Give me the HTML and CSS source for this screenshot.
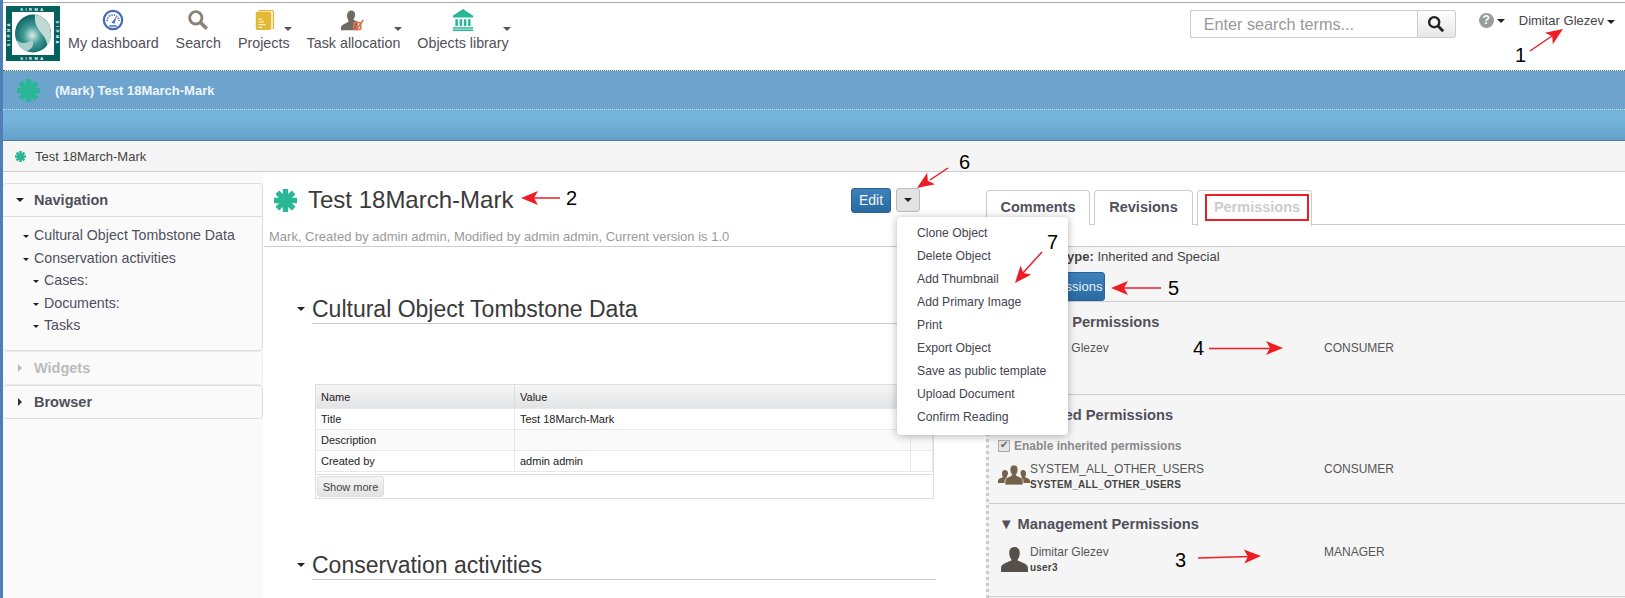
FILE: index.html
```html
<!DOCTYPE html>
<html lang="en">
<head>
    <meta charset="UTF-8">
    <title>Test 18March-Mark</title>
    <link rel="stylesheet" href="styles.css">
</head>
<body>
    <svg class="defs" width="0" height="0">
        <symbol id="star" viewBox="0 0 24 24">
            <g stroke="#2ab795" stroke-width="5.6">
                <path d="M12 0V24M0 12H24M3.5 3.5L20.5 20.5M20.5 3.5L3.5 20.5"/>
            </g>
            <circle cx="12" cy="12" r="7" fill="#2ab795"/>
        </symbol>
        <symbol id="glass" viewBox="0 0 20 20">
            <circle cx="8" cy="8" r="5.6" fill="none" stroke="currentColor" stroke-width="2.6"/>
            <path d="M12 12L18 18" stroke="currentColor" stroke-width="3.2"/>
        </symbol>
        <symbol id="person" viewBox="0 0 28 26">
            <path d="M14 0c4 0 5.500 3 5.500 6.500 0 3-1.500 5.500-2.500 7 1 2 11 3 11 8V26H0v-4.500c0-5 10-6 11-8-1-1.500-2.500-4-2.500-7C8.500 3 10 0 14 0z" fill="#57504a"/>
        </symbol>
    </svg>

    <div class="page">
        <header class="topbar">
            <svg class="logo" viewBox="0 0 54 55">
                <defs>
                    <radialGradient id="ball" cx="48%" cy="55%" r="55%">
                        <stop offset="0" stop-color="#dceeea"/>
                        <stop offset="0.45" stop-color="#3f9a94"/>
                        <stop offset="1" stop-color="#0a5f60"/>
                    </radialGradient>
                </defs>
                <rect width="54" height="55" fill="#05615f"/>
                <rect x="6" y="6" width="42" height="43" fill="#fff"/>
                <ellipse cx="27" cy="27.500" rx="18" ry="19" fill="url(#ball)"/>
                <path d="M29 8.700C38 9.500 45 18 45 27.500C45 32 43.500 36 41 39.500C42 29 27 25 29 8.700z" fill="#bfd9d7"/>
                <path d="M20 45C15 43 11 38 10 33C14 39 22 37 26 34C29 38 26 44 20 45z" fill="#a9cfcb"/>
                <text class="logo-txt" x="27" y="4.500" text-anchor="middle">SIRMA</text>
                <text class="logo-txt" x="27" y="53.500" text-anchor="middle">SIRMA</text>
                <text class="logo-txt" x="27" y="4.500" text-anchor="middle" transform="rotate(-90 27 27.500)">SIRMA</text>
                <text class="logo-txt" x="27" y="4.500" text-anchor="middle" transform="rotate(90 27 27.500)">SIRMA</text>
            </svg>

            <nav class="menu">
                <a class="menu-item">
                    <svg class="menu-icon" viewBox="0 0 24 24">
                        <circle cx="12" cy="12" r="10" fill="#fff" stroke="#4468b4" stroke-width="2.400"/>
                        <path d="M5.500 13a6.500 6.500 0 0 1 13 0" fill="none" stroke="#4468b4" stroke-width="1.800" stroke-dasharray="1.500 1.200"/>
                        <path d="M10.500 15L16 7.500L13.500 16z" fill="#4468b4"/>
                        <path d="M8 18.500H16" stroke="#4468b4" stroke-width="1.600"/>
                    </svg>
                    <span>My dashboard</span>
                </a>
                <a class="menu-item">
                    <svg class="menu-icon glass"><use href="#glass"/></svg>
                    <span>Search</span>
                </a>
                <a class="menu-item has-caret">
                    <svg class="menu-icon" viewBox="0 0 24 24">
                        <path d="M6 1H21a2 2 0 0 1 2 2V22H21.500V2.500H6z" fill="#e3b836"/>
                        <rect x="3" y="3" width="17" height="20" rx="2" fill="#e3b836"/>
                        <path d="M6 11H10M6 14H12M6 17H14M6 20H10" stroke="#fbeec0" stroke-width="1.200"/>
                    </svg>
                    <span>Projects</span>
                    <i class="caret"></i>
                </a>
                <a class="menu-item has-caret">
                    <svg class="menu-icon wide" viewBox="0 0 28 24">
                        <path d="M12 1c3 0 4.500 2 4.500 5 0 2-1 4-2 5 1 2 4 2 5 3v10H0v-3c0-4 8-5 9-8-1-1-2-4-2-6 0-3 2-6 5-6z" fill="#6f6a64"/>
                        <rect x="15" y="15" width="8" height="8" rx="1" fill="none" stroke="#e2704a" stroke-width="2"/>
                        <path d="M17 18L19.500 21L26 12" fill="none" stroke="#e2704a" stroke-width="1.800"/>
                    </svg>
                    <span>Task allocation</span>
                    <i class="caret"></i>
                </a>
                <a class="menu-item has-caret">
                    <svg class="menu-icon wide" viewBox="0 0 26 26">
                        <path d="M13 0L25 8V10H1V8z" fill="#2ab795"/>
                        <path d="M4 12H7V20H4zM9 12H12V20H9zM14 12H17V20H14zM19 12H22V20H19z" fill="#2ab795"/>
                        <rect x="1" y="21.500" width="24" height="1.800" fill="#2ab795"/>
                        <rect x="1" y="24.200" width="24" height="1.800" fill="#2ab795"/>
                    </svg>
                    <span>Objects library</span>
                    <i class="caret"></i>
                </a>
            </nav>

            <div class="tools">
                <form class="searchbox">
                    <input type="text" placeholder="Enter search terms...">
                    <button type="button"><svg class="search-glass"><use href="#glass"/></svg></button>
                </form>
                <span class="help">?</span><i class="caret dark"></i>
                <span class="username">Dimitar Glezev</span><i class="caret dark"></i>
            </div>
        </header>

        <div class="band">
            <svg class="band-star"><use href="#star"/></svg>
            <span>(Mark) Test 18March-Mark</span>
        </div>
        <div class="subband"></div>
        <div class="crumbs">
            <svg class="crumb-star"><use href="#star"/></svg>
            <span>Test 18March-Mark</span>
        </div>

        <div class="main">
            <aside class="side">
                <div class="panel">
                    <div class="panel-head"><i class="caret dark"></i>Navigation</div>
                    <ul class="tree">
                        <li><i class="caret dark"></i>Cultural Object Tombstone Data</li>
                        <li><i class="caret dark"></i>Conservation activities</li>
                        <li class="sub"><i class="caret dark"></i>Cases:</li>
                        <li class="sub"><i class="caret dark"></i>Documents:</li>
                        <li class="sub"><i class="caret dark"></i>Tasks</li>
                    </ul>
                </div>
                <div class="panel muted"><div class="panel-head"><i class="caret-right"></i>Widgets</div></div>
                <div class="panel"><div class="panel-head"><i class="caret-right"></i>Browser</div></div>
            </aside>

            <section class="center">
                <div class="obj-head">
                    <div class="obj-title">
                        <svg class="title-star"><use href="#star"/></svg>
                        <h1>Test 18March-Mark</h1>
                        <button class="btn-edit">Edit</button>
                        <button class="btn-more"><i class="caret dark"></i></button>
                    </div>
                    <p class="obj-meta">Mark, Created by admin admin, Modified by admin admin, Current version is 1.0</p>
                </div>

                <h2 class="sec-title"><i class="caret dark"></i>Cultural Object Tombstone Data</h2>
                <div class="grid-wrap">
                    <table class="grid">
                        <tr><th class="c1">Name</th><th class="c2">Value</th><th></th></tr>
                        <tr><td>Title</td><td>Test 18March-Mark</td><td></td></tr>
                        <tr class="alt"><td>Description</td><td></td><td></td></tr>
                        <tr><td>Created by</td><td>admin admin</td><td></td></tr>
                    </table>
                    <div class="grid-foot"><button>Show more</button></div>
                </div>
                <h2 class="sec-title"><i class="caret dark"></i>Conservation activities</h2>

                <ul class="dropdown">
                    <li>Clone Object</li>
                    <li>Delete Object</li>
                    <li>Add Thumbnail</li>
                    <li>Add Primary Image</li>
                    <li>Print</li>
                    <li>Export Object</li>
                    <li>Save as public template</li>
                    <li>Upload Document</li>
                    <li>Confirm Reading</li>
                </ul>
            </section>

            <section class="right">
                <div class="tabs">
                    <a class="tab">Comments</a>
                    <a class="tab">Revisions</a>
                    <a class="tab active"><span>Permissions</span></a>
                </div>
                <div class="perm-body">
                    <p class="perm-type"><b>Permission type:</b> Inherited and Special</p>
                    <button class="btn-perm">Edit Permissions</button>

                    <div class="perm-sec special">
                        <h3>&#9660; Special Permissions</h3>
                        <div class="perm-row">
                            <div class="who"><div>Dimitar Glezev</div></div>
                            <div class="role">CONSUMER</div>
                        </div>
                    </div>

                    <div class="perm-sec inherited">
                        <h3>&#9660; Inherited Permissions</h3>
                        <label class="inherit"><input type="checkbox" checked disabled>Enable inherited permissions</label>
                        <div class="perm-row">
                            <svg class="users" viewBox="0 0 32 20">
                                <path d="M7 5c2 0 3 1.500 3 3 0 2-1 3-1.500 4 1 1 6 1 6 4v2H0v-2c0-3 4-3 5-4-.500-1-1-2-1-4 0-1.500 1-3 3-3zM25 5c2 0 3 1.500 3 3 0 2-.500 3-1 4 1 1 5 1 5 4v2H18v-2c0-3 5-3 6-4-.500-1-1.500-2-1.500-4 0-1.500.500-3 2.500-3z" fill="#75604a"/>
                                <path d="M16 0c3 0 4 2 4 4.500 0 2.500-1 4-2 5.500 1 1.500 7 2 7 6v4H7v-4c0-4 6-4.500 7-6-1-1.500-2-3-2-5.500C12 2 13 0 16 0z" fill="#75604a" stroke="#f5f5f5" stroke-width=".8"/>
                            </svg>
                            <div class="who">
                                <div>SYSTEM_ALL_OTHER_USERS</div>
                                <small>SYSTEM_ALL_OTHER_USERS</small>
                            </div>
                            <div class="role">CONSUMER</div>
                        </div>
                    </div>

                    <div class="perm-sec managed">
                        <h3>&#9660; Management Permissions</h3>
                        <div class="perm-row">
                            <svg class="user"><use href="#person"/></svg>
                            <div class="who">
                                <div>Dimitar Glezev</div>
                                <small>user3</small>
                            </div>
                            <div class="role">MANAGER</div>
                        </div>
                    </div>
                </div>
            </section>
        </div>

        <!-- notes drawn on top of the screenshot -->
        <svg class="notes" width="1625" height="598">
            <defs>
                <symbol id="head" overflow="visible"><path d="M0 0L-17 -7L-13 0L-17 7z" fill="#ee1c25"/></symbol>
            </defs>
            <g stroke="#ee1c25" stroke-width="1.500">
                <path d="M1530 51L1552 36"/>
                <path d="M560 198H530"/>
                <path d="M948 168L930 180"/>
                <path d="M1042 252L1022 274"/>
                <path d="M1161 288H1122"/>
                <path d="M1209 348.500H1270"/>
                <path d="M1198 558L1250 556.500"/>
            </g>
            <use href="#head" transform="translate(1563 29) rotate(-34)"/>
            <use href="#head" transform="translate(521 198) rotate(180)"/>
            <use href="#head" transform="translate(917 188) rotate(146)"/>
            <use href="#head" transform="translate(1015 283) rotate(130)"/>
            <use href="#head" transform="translate(1111 288) rotate(180)"/>
            <use href="#head" transform="translate(1283 348)"/>
            <use href="#head" transform="translate(1261 556) rotate(-2)"/>
            <g class="note-num">
                <text x="1515" y="62">1</text>
                <text x="566" y="205">2</text>
                <text x="1175" y="567">3</text>
                <text x="1193" y="355">4</text>
                <text x="1168" y="295">5</text>
                <text x="959" y="169">6</text>
                <text x="1047" y="249">7</text>
            </g>
        </svg>
    </div>
</body>
</html>
```

FILE: styles.css
```css
/* Page frame */
html, body {
    margin: 0;
    height: 598px;
    overflow: hidden;
}
body {
    font-family: "Liberation Sans", Arial, sans-serif;
    font-size: 13px;
    color: #555;
    background: #fff;
}
.defs {
    display: block;
    height: 0;
}
.page {
    position: relative;
    height: 598px;
    box-sizing: border-box;
    padding-top: 2px;
    border-left: 3px solid #4f7fb5;
}

/* Carets */
.caret {
    display: inline-block;
    width: 0;
    height: 0;
    border-top: 4px solid #555;
    border-left: 4px solid transparent;
    border-right: 4px solid transparent;
}
.caret.dark {
    border-top-color: #222;
}
.caret-right {
    display: inline-block;
    width: 0;
    height: 0;
    border-left: 4px solid #333;
    border-top: 4px solid transparent;
    border-bottom: 4px solid transparent;
}

/* Top bar */
.topbar {
    display: flex;
    height: 67px;
    border-top: 1px solid #aaa;
    border-bottom: 1px dotted #3b7d6f;
    background: #fff;
}
.logo {
    width: 54px;
    height: 55px;
    margin: 3px 0 0 3px;
}
.logo-txt {
    font-size: 4px;
    font-weight: bold;
    fill: #fff;
    letter-spacing: 2.500px;
}
.menu {
    display: flex;
    margin-left: 8px;
}
.menu-item {
    position: relative;
    display: flex;
    flex-direction: column;
    align-items: center;
    margin-right: 17px;
    padding-top: 6px;
    font-size: 14.300px;
    color: #50505a;
}
.menu-icon {
    width: 22px;
    height: 22px;
    margin-bottom: 4px;
}
.menu-icon.wide {
    width: 24px;
    height: 22px;
}
.menu-icon.glass {
    color: #8a8078;
}
.has-caret .caret {
    position: absolute;
    top: 24px;
    right: -2px;
}
.tools {
    display: flex;
    align-items: flex-start;
    margin-left: auto;
    padding-top: 7px;
    padding-right: 10px;
}
.searchbox {
    display: flex;
    margin: 0 23px 0 0;
}
.searchbox input {
    width: 227px;
    height: 28px;
    box-sizing: border-box;
    padding: 0 13px;
    border: 1px solid #ccc;
    border-right: 0;
    border-radius: 3px 0 0 3px;
    font-family: inherit;
    font-size: 16.200px;
}
.searchbox input::placeholder {
    color: #999;
}
.searchbox button {
    width: 39px;
    height: 28px;
    padding: 0;
    border: 1px solid #ccc;
    border-radius: 0 3px 3px 0;
    background: linear-gradient(#fff, #e6e6e6);
}
.search-glass {
    display: block;
    width: 18px;
    height: 18px;
    margin: 0 auto;
    color: #222;
}
.help {
    width: 15px;
    height: 15px;
    margin-top: 3px;
    border-radius: 50%;
    background: #9b9b9b;
    color: #fff;
    font-size: 12px;
    font-weight: bold;
    line-height: 15px;
    text-align: center;
}
.help + .caret {
    margin: 9px 14px 0 3px;
}
.username {
    margin-top: 3px;
    font-size: 13px;
    color: #444;
}
.username + .caret {
    margin: 10px 0 0 3px;
}

/* Blue bands */
.band {
    display: flex;
    align-items: center;
    height: 39px;
    box-sizing: border-box;
    padding-left: 14px;
    border-bottom: 1px dotted #cfe4f2;
    background: #6ea3cd;
    color: #eef6fb;
    font-size: 13px;
    font-weight: bold;
}
.band-star {
    width: 23px;
    height: 23px;
    margin: 0 13px 0 0;
}
.band span {
    margin-left: 2px;
}
.subband {
    height: 30px;
    border-bottom: 1px solid #4a7ea8;
    background: linear-gradient(#74b3da 40%, #659fc9);
}
.crumbs {
    display: flex;
    align-items: center;
    height: 30px;
    padding-left: 12px;
    border-bottom: 1px solid #ccc;
    background: #f5f5f5;
    font-size: 13px;
    color: #444;
}
.crumb-star {
    width: 11px;
    height: 11px;
    margin-right: 9px;
}

/* Three columns */
.main {
    display: grid;
    grid-template-columns: 260px 723px 1fr;
    height: 426px;
}

/* Left side */
.side {
    padding-top: 11px;
    background: #fafafa;
}
.panel {
    border: 1px solid #ddd;
    border-left: 0;
    border-radius: 4px;
}
.panel-head {
    display: flex;
    align-items: center;
    height: 32px;
    padding-left: 13px;
    color: #50505a;
    font-size: 14.500px;
    font-weight: bold;
}
.panel-head .caret {
    margin-right: 10px;
}
.panel-head .caret-right {
    margin: 0 12px 0 2px;
}
.panel.muted {
    border-color: #eee;
}
.panel.muted .panel-head {
    color: #bbb;
}
.panel.muted .caret-right {
    border-left-color: #bbb;
}
.tree {
    margin: 0;
    padding: 7px 0 13px 20px;
    border-top: 1px solid #ddd;
    list-style: none;
}
.tree li {
    height: 22.500px;
    font-size: 14.200px;
    line-height: 22px;
    color: #505060;
}
.tree li.sub {
    padding-left: 10px;
}
.tree .caret {
    margin-right: 5px;
    vertical-align: 2px;
    border-width: 3.500px 3.500px 0;
}

/* Center */
.center {
    position: relative;
    padding-left: 1px;
}
.obj-head {
    height: 75px;
    box-sizing: border-box;
    border-bottom: 1px solid #ccc;
}
.obj-title {
    display: flex;
    align-items: center;
    height: 56px;
    padding-left: 10px;
}
.title-star {
    width: 23px;
    height: 23px;
    margin-right: 11px;
}
h1 {
    margin: 0;
    width: 543px;
    font-size: 24px;
    font-weight: normal;
    color: #3a3a3a;
}
.btn-edit {
    width: 40px;
    height: 25px;
    padding: 0;
    border: 1px solid #2a6496;
    border-radius: 3px;
    background: linear-gradient(#3f81bb, #2a6aa3);
    color: #f2f7fb;
    font-family: inherit;
    font-size: 14px;
}
.btn-more {
    width: 24px;
    height: 24px;
    margin-left: 5px;
    padding: 0;
    border: 1px solid #bbb;
    border-radius: 3px;
    background: #e3e3e3;
}
.btn-more .caret {
    display: block;
    margin: 0 auto;
    border-width: 4px 4px 0;
}
.obj-meta {
    margin: 1px 0 0 5px;
    font-size: 13px;
    color: #9a9a9a;
}
.sec-title {
    position: relative;
    height: 28px;
    margin: 48px 0 0 48px;
    width: 624px;
    border-bottom: 1px solid #ccc;
    font-size: 23px;
    font-weight: normal;
    line-height: 28px;
    color: #3a3a3a;
}
.sec-title .caret {
    position: absolute;
    left: -15px;
    top: 12px;
}
.grid-wrap {
    width: 617px;
    margin: 60px 0 0 51px;
    border: 1px solid #ddd;
}
.grid {
    width: 100%;
    border-collapse: collapse;
    font-size: 11px;
    color: #222;
}
.grid th {
    height: 23px;
    padding: 0 5px;
    border-right: 1px solid #ddd;
    background: linear-gradient(#f6f6f6, #e2e3e4);
    font-weight: normal;
    text-align: left;
}
.grid td {
    height: 20px;
    padding: 0 5px;
    border: 1px solid #e8e8e8;
    border-left: 0;
}
.grid .c1 {
    width: 188px;
}
.grid .c2 {
    width: 385px;
}
.grid .alt td {
    background: #fafafa;
}
.grid-foot {
    height: 23px;
    margin-top: 2px;
    border-top: 1px solid #ddd;
}
.grid-foot button {
    display: block;
    width: 67px;
    height: 21px;
    margin: 1px;
    padding: 0;
    border: 1px solid #ddd;
    border-radius: 3px;
    background: linear-gradient(#f5f5f5, #e3e3e3);
    font-family: inherit;
    font-size: 11px;
    color: #444;
}
.grid-wrap + .sec-title {
    margin-top: 52px;
}
.dropdown {
    position: absolute;
    top: 45px;
    left: 634px;
    width: 171px;
    height: 218px;
    box-sizing: border-box;
    margin: 0;
    padding: 5px 0 0 20px;
    border-radius: 4px;
    background: #fff;
    box-shadow: 0 1px 8px rgba(0, 0, 0, 0.3);
    list-style: none;
    z-index: 2;
}
.dropdown li {
    width: fit-content;
    height: 23px;
    font-size: 12.200px;
    line-height: 23px;
    color: #444450;
}

/* Right side */
.right {
    display: flex;
    flex-direction: column;
}
.tabs {
    display: flex;
    gap: 4px;
    height: 75px;
    box-sizing: border-box;
    padding-top: 18px;
    border-bottom: 1px solid #ccc;
    background: linear-gradient(#fff 52px, #ccc 52px, #ccc 53px, #fff 53px);
}
.tab {
    width: 102px;
    height: 34px;
    border: 1px solid #ccc;
    border-bottom: 0;
    border-radius: 4px 4px 0 0;
    background: #fff;
    color: #50505a;
    font-size: 14.500px;
    font-weight: bold;
    line-height: 33px;
    text-align: center;
}
.tab:nth-child(2) {
    width: 97px;
}
.tab.active {
    width: 113px;
    height: 35px;
    color: #ccc;
}
.tab.active span {
    display: block;
    width: 100px;
    height: 23px;
    margin: 3px 0 0 7px;
    border: 2px solid #ee1c25;
    line-height: 23px;
}
.perm-body {
    flex: 1;
    border-left: 3px dotted #ccc;
    background: #f5f5f5;
}
.perm-type {
    margin: 0;
    padding: 0 0 8px 0;
    line-height: 20px;
    font-size: 13px;
    color: #444;
    white-space: nowrap;
}
.btn-perm {
    display: block;
    width: 102px;
    height: 29px;
    margin: -3px 0 0 14px;
    padding: 0;
    border: 1px solid #2a6496;
    border-radius: 3px;
    background: linear-gradient(#3f81bb, #2a6aa3);
    color: #eaf2f8;
    font-family: inherit;
    font-size: 13px;
}
.perm-sec {
    box-sizing: border-box;
    border-top: 1px solid #ccc;
    padding: 12px 0 0 9px;
}
.perm-sec h3 {
    margin: 0;
    font-size: 14.700px;
    font-weight: bold;
    color: #50505a;
}
.perm-sec.special {
    height: 93px;
}
.perm-sec.inherited {
    height: 109px;
}
.perm-sec.inherited h3 {
    padding-left: 3px;
}
.perm-sec.managed {
    height: 94px;
    padding-left: 10px;
    border-bottom: 1px solid #ccc;
}
.perm-row {
    display: flex;
    align-items: flex-start;
    margin-top: 11px;
    font-size: 12px;
    color: #555;
}
.inherited .perm-row {
    margin-top: 9px;
}
.managed .perm-row {
    margin-top: 13px;
    padding-left: 5px;
}
.who {
    width: 294px;
    box-sizing: border-box;
}
.special .who {
    width: 326px;
    padding-left: 32px;
}
.who small {
    display: block;
    margin-top: 3px;
    font-size: 10px;
    font-weight: bold;
    color: #444;
    letter-spacing: 0.2px;
}
.users {
    width: 32px;
    height: 20px;
    margin-top: 3px;
}
.user {
    width: 27px;
    height: 25px;
    margin: 2px 2px 0 -3px;
}
.inherit {
    display: flex;
    align-items: center;
    margin-top: 16px;
    font-size: 12px;
    font-weight: bold;
    color: #8a8a8a;
}
.inherit input {
    appearance: none;
    position: relative;
    width: 12px;
    height: 12px;
    margin: 0 4px 0 0;
    border: 1px solid #aaa;
    background: #e4e4e4;
}
.inherit input::after {
    content: "\2714";
    position: absolute;
    top: -2px;
    left: 1px;
    font-size: 10px;
    color: #666;
}

/* Notes on top */
.notes {
    position: absolute;
    top: 0;
    left: -3px;
    z-index: 5;
}
.note-num {
    font-size: 20px;
    fill: #000;
}
```
